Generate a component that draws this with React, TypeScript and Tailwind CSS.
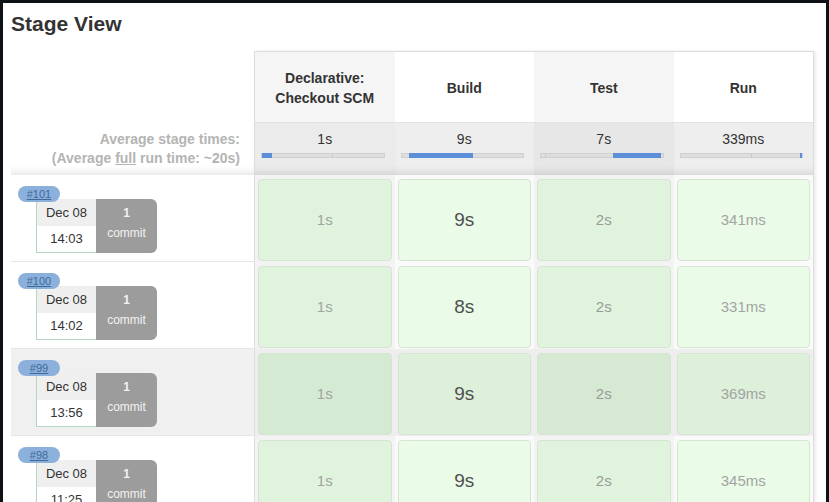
import React from "react";

const stages = [
  { name: ["Declarative:", "Checkout SCM"], avg: "1s", start: 0, width: 8, tick: 58 },
  { name: ["Build"], avg: "9s", start: 6.5, width: 52, tick: 58 },
  { name: ["Test"], avg: "7s", start: 59, width: 40, tick: 3 },
  { name: ["Run"], avg: "339ms", start: 98.6, width: 1.4, tick: 58 },
];

const runs = [
  { id: "#101", date: "Dec 08", time: "14:03", times: ["1s", "9s", "2s", "341ms"], hl: false },
  { id: "#100", date: "Dec 08", time: "14:02", times: ["1s", "8s", "2s", "331ms"], hl: false },
  { id: "#99", date: "Dec 08", time: "13:56", times: ["1s", "9s", "2s", "369ms"], hl: true },
  { id: "#98", date: "Dec 08", time: "11:25", times: ["1s", "9s", "2s", "345ms"], hl: false },
];

// per column: header bg, avg bg, column bg, cell bg, highlighted cell bg, text style
const cols = [
  { head: "bg-[#f5f5f5]", avg: "bg-[#ebebeb]", col: "bg-[#f3f3f3]", cell: "bg-[#e0f4dd]", hl: "bg-[#d5ead2]", text: "text-[15px] text-[#a3a3a3]" },
  { head: "bg-white", avg: "bg-[#eeeeee]", col: "bg-[#fafafa]", cell: "bg-[#eafce8]", hl: "bg-[#dcf0da]", text: "text-[19px] text-[#505050]" },
  { head: "bg-[#f5f5f5]", avg: "bg-[#e7e7e7]", col: "bg-[#f3f3f3]", cell: "bg-[#e0f4dd]", hl: "bg-[#d5e9d3]", text: "text-[15px] text-[#9a9a9a]" },
  { head: "bg-white", avg: "bg-[#eeeeee]", col: "bg-[#fafafa]", cell: "bg-[#eafce8]", hl: "bg-[#dcf0da]", text: "text-[15px] text-[#a3a3a3]" },
];

const avgShadow = "shadow-[inset_0_-9px_8px_-7px_rgba(0,0,0,0.12)]";

function RunLabel({ run }: { run: (typeof runs)[number] }) {
  return (
    <div
      className={`relative h-[87px] border-b border-[#e6e6e6] ${
        run.hl ? "bg-[#f0f0f0]" : "bg-white"
      }`}
    >
      <span className="absolute left-[7px] top-[11px] z-10 flex h-[16px] w-[42px] items-center justify-center rounded-full bg-[#8ab0db] text-[11px] text-[#3f6a9a] underline">
        {run.id}
      </span>
      <div className="ml-[25px] flex pt-[24px]">
        <div className="flex h-[54px] w-[60px] flex-col border-b border-l border-[#b5d7c1] text-[13px] text-[#333]">
          <div className="flex h-[27px] items-center justify-center bg-[#efefef]">{run.date}</div>
          <div className="flex flex-1 items-center justify-center bg-white">{run.time}</div>
        </div>
        <div className="flex h-[54px] w-[61px] flex-col items-center justify-center rounded-r-[6px] bg-[#9c9c9c] pb-[6px] text-[12px] leading-[20px] text-[#f2f2f2]">
          <span className="font-bold">1</span>
          <span>commit</span>
        </div>
      </div>
    </div>
  );
}

export default function App() {
  return (
    <div className="flex h-[502px] w-[829px] overflow-hidden bg-[#0e1116] px-[3px] pt-[3px] font-['Liberation_Sans',Arial,sans-serif]">
      <div className="flex-1 overflow-hidden bg-white pl-[8px] pt-[8px]">
        <h1 className="text-[21px] font-bold leading-[25px] text-[#333]">Stage View</h1>

        <div className="mt-[15px] flex">
          {/* Left: labels */}
          <div className="w-[243px]">
            <div className="h-[71px]" />
            <div
              className={`flex h-[53px] flex-col items-end justify-center pr-[14px] text-[14px] font-bold leading-[19px] text-[#b4b4b4] ${avgShadow}`}
            >
              <span>Average stage times:</span>
              <span>
                (Average <span className="underline">full</span> run time: ~20s)
              </span>
            </div>
            {runs.map((run) => (
              <RunLabel key={run.id} run={run} />
            ))}
          </div>

          {/* Right: stage table */}
          <div className="w-[560px] border-l border-r border-t border-[#dddddd] shadow-[2px_0_3px_rgba(0,0,0,0.08)]">
            <div className="grid h-[70px] grid-cols-4">
              {stages.map((s, i) => (
                <div
                  key={i}
                  className={`flex flex-col items-center justify-center pt-[2px] text-[14px] font-bold leading-[20px] text-[#333] ${cols[i].head}`}
                >
                  {s.name.map((n) => (
                    <span key={n}>{n}</span>
                  ))}
                </div>
              ))}
            </div>
            <div className="grid h-[53px] grid-cols-4 border-t border-[#e2e2e2]">
              {stages.map((s, i) => (
                <div key={i} className={`flex flex-col items-center pt-[8px] ${cols[i].avg} ${avgShadow}`}>
                  <span className="text-[14px] leading-[16px] text-[#333]">{s.avg}</span>
                  <div className="relative ml-[6px] mr-[10px] mt-[6px] h-[5px] self-stretch border border-[#d0d0d0] bg-[#dedede]">
                    <div className="absolute top-0 h-full w-px bg-[#c8c8c8]" style={{ left: `${s.tick}%` }} />
                    <div
                      className="absolute top-[-1px] h-[5px] bg-[#5d8fd8]"
                      style={{ left: `${s.start}%`, width: `${s.width}%` }}
                    />
                  </div>
                </div>
              ))}
            </div>
            {runs.map((run) => (
              <div key={run.id} className="grid h-[87px] grid-cols-4">
                {run.times.map((t, i) => (
                  <div
                    key={i}
                    className={`px-[3px] pb-[1px] pt-[4px] ${run.hl ? "bg-[#eeeeee]" : cols[i].col}`}
                  >
                    <div
                      className={`flex h-full items-center justify-center rounded-[4px] border border-[#d5e5d2] ${
                        run.hl ? cols[i].hl : cols[i].cell
                      } ${cols[i].text}`}
                    >
                      {t}
                    </div>
                  </div>
                ))}
              </div>
            ))}
          </div>
        </div>
      </div>
    </div>
  );
}
